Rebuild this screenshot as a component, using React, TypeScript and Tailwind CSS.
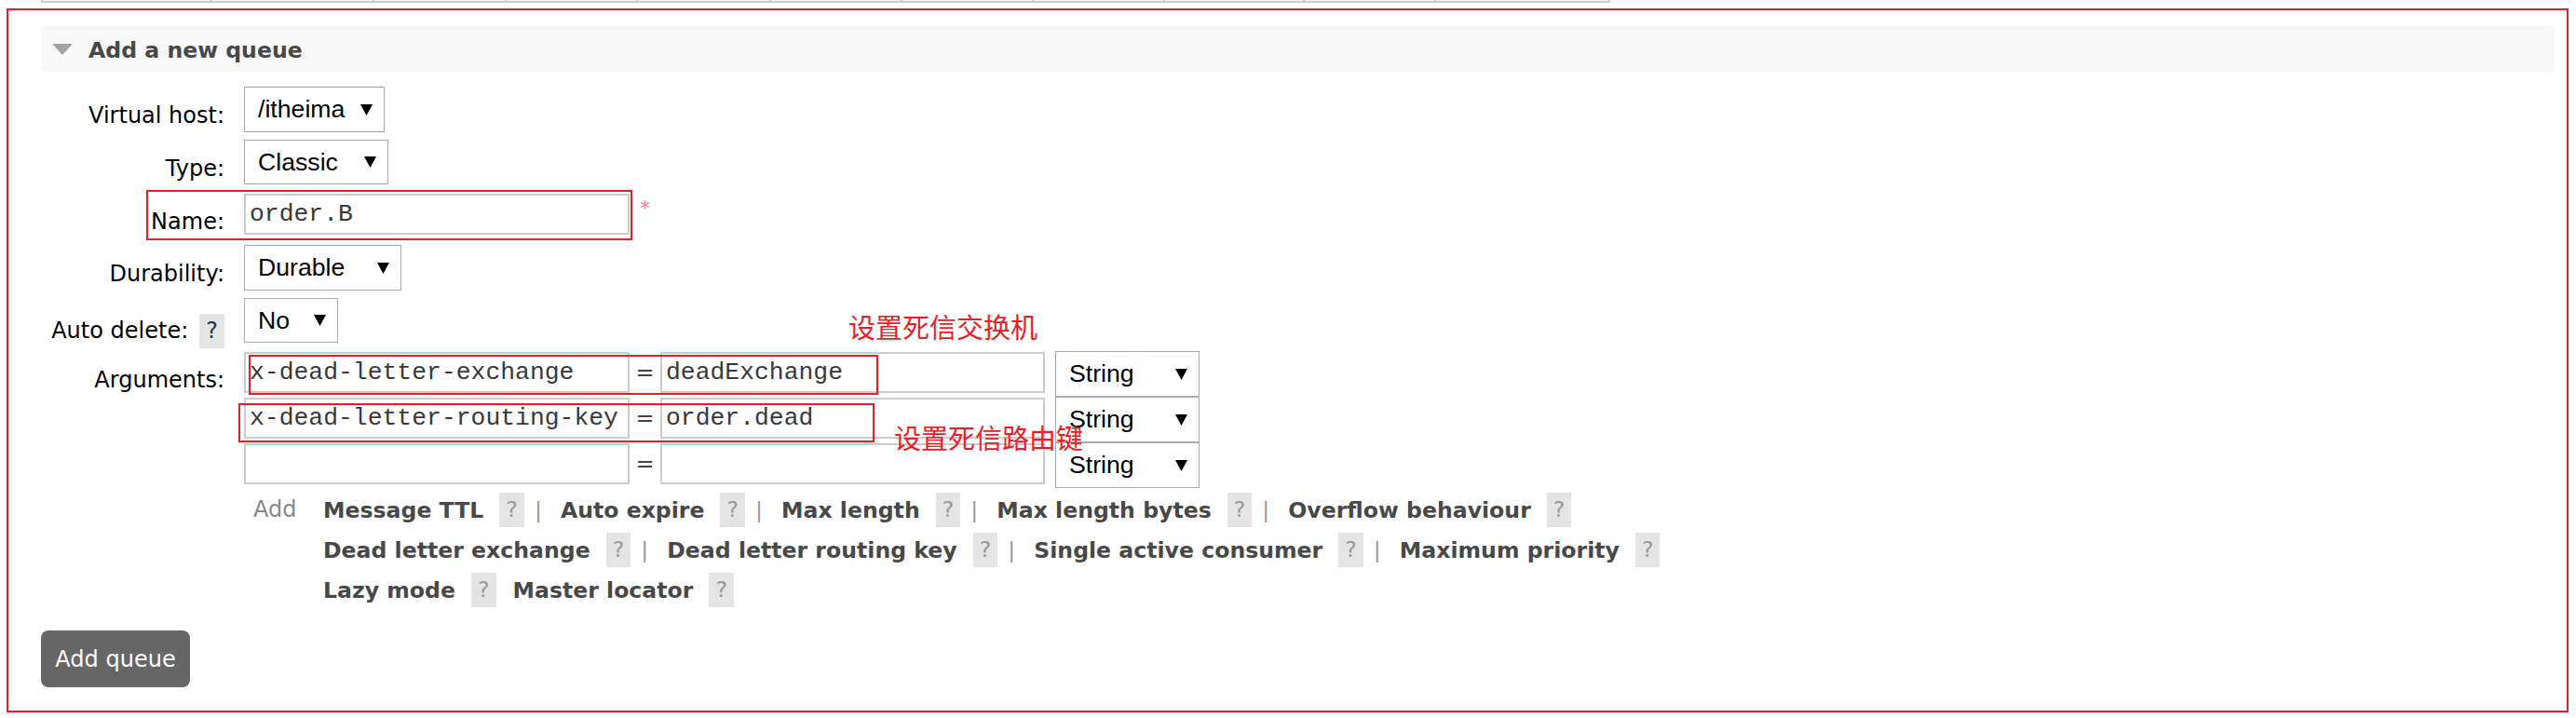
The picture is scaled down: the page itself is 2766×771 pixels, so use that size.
import type { ReactNode } from "react";

const TABLE_CELLS = [182, 174, 142, 141, 143, 141, 141, 141, 150, 141, 189];

function Arrow() {
  return (
    <svg width="13" height="12" viewBox="0 0 13 12" className="flex-shrink-0">
      <path d="M0 0H13L6.5 12Z" fill="#000" />
    </svg>
  );
}

function FakeSelect({ value, className }: { value: string; className: string }) {
  return (
    <div
      className={`flex items-center justify-between border border-[#a9a9a9] bg-white pl-[14px] pr-[12px] font-['Liberation_Sans',Arial,sans-serif] text-[26.67px] leading-none text-black ${className}`}
    >
      <span>{value}</span>
      <Arrow />
    </div>
  );
}

function TextBox({ value, className }: { value?: string; className: string }) {
  return (
    <div
      className={`flex items-center border-2 border-[#cccccc] bg-white pl-[4px] font-['Liberation_Mono','Courier_New',monospace] text-[26.4px] leading-none text-[#383838] ${className}`}
    >
      {value}
    </div>
  );
}

function Help({ dark }: { dark?: boolean }) {
  return (
    <span
      className={`inline-block bg-[#e4e4e4] px-[7px] py-[4px] font-normal leading-[29px] ${
        dark ? "text-[#333]" : "text-[#999]"
      }`}
    >
      ?
    </span>
  );
}

function FormRow({
  label,
  children,
  className = "h-[49px]",
}: {
  label: ReactNode;
  children: ReactNode;
  className?: string;
}) {
  return (
    <div className={`flex ${className}`}>
      <div className="w-[197px] flex-shrink-0 pt-[17px] text-right leading-[28px] text-black">
        {label}
      </div>
      <div className="ml-[21px]">{children}</div>
    </div>
  );
}

function ArgRow({ k, v }: { k?: string; v?: string }) {
  return (
    <div className="flex h-[49px] items-start">
      <TextBox value={k} className="mt-[1px] h-[44px] w-[414px]" />
      <span className="flex w-[33px] justify-center pt-[9px] leading-[28px] text-[#444]">=</span>
      <TextBox value={v} className="mt-[1px] h-[44px] w-[413px]" />
      <FakeSelect value="String" className="ml-[11px] h-[49px] w-[155px]" />
    </div>
  );
}

type Opt = { text: string; sep?: boolean };

const OPTION_LINES: Opt[][] = [
  [
    { text: "Message TTL", sep: true },
    { text: "Auto expire", sep: true },
    { text: "Max length", sep: true },
    { text: "Max length bytes", sep: true },
    { text: "Overflow behaviour" },
  ],
  [
    { text: "Dead letter exchange", sep: true },
    { text: "Dead letter routing key", sep: true },
    { text: "Single active consumer", sep: true },
    { text: "Maximum priority" },
  ],
  [{ text: "Lazy mode" }, { text: "Master locator" }],
];

function OptionLine({ items }: { items: Opt[] }) {
  return (
    <div className="flex h-[43px] items-center">
      {items.map((o, i) => (
        <div key={o.text} className={`flex items-center ${i === 0 ? "" : items[i - 1].sep ? "ml-[20px]" : "ml-[18px]"}`}>
          <span className="leading-[28px]">{o.text}</span>
          <span className="ml-[17px]">
            <Help />
          </span>
          {o.sep && <span className="ml-[11px] w-[8px] font-normal leading-[28px] text-[#999]">|</span>}
        </div>
      ))}
    </div>
  );
}

export default function App() {
  return (
    <div className="relative h-[771px] w-[2766px] overflow-hidden bg-white font-['DejaVu_Sans',Verdana,sans-serif] text-[24px]">
      {/* bottom of the table above */}
      <div className="ml-[44px] flex h-[3px]">
        {TABLE_CELLS.map((w, i) => (
          <div
            key={i}
            className={`h-full border-b-2 border-l-2 border-[#cccccc] ${i === TABLE_CELLS.length - 1 ? "border-r-2" : ""}`}
            style={{ width: w }}
          />
        ))}
      </div>

      {/* outer annotation frame */}
      <div className="ml-[7px] mt-[6px] h-[756px] w-[2751px] border-2 border-[#ed1c24] pl-[35px] pr-[13px] pt-[17px]">
        <div className="flex h-[49px] items-center bg-[#f8f8f8]">
          <svg width="22" height="12" viewBox="0 0 22 12" className="ml-[12px]">
            <path d="M0 0H22L11 12Z" fill="#a3a3a3" />
          </svg>
          <h2 className="ml-[17px] pt-[2px] text-[23.6px] font-bold leading-[28px] text-[#484848]">
            Add a new queue
          </h2>
        </div>

        <div className="mt-[16px] flex flex-col">
          <FormRow label="Virtual host:">
            <FakeSelect value="/itheima" className="h-[49px] w-[151px]" />
          </FormRow>
          <div className="h-[8px]" />
          <FormRow label="Type:" className="h-[48px]">
            <FakeSelect value="Classic" className="h-[48px] w-[155px]" />
          </FormRow>
          <div className="h-[9px]" />
          <FormRow label="Name:" className="h-[48px]">
            <div className="flex items-start">
              <TextBox value="order.B" className="mt-[1px] h-[44px] w-[414px]" />
              <span className="ml-[11px] pt-[3px] font-['DejaVu_Sans',sans-serif] text-[22px] leading-[28px] text-[#ff8080]">
                *
              </span>
            </div>
          </FormRow>
          <div className="h-[8px]" />
          <FormRow label="Durability:">
            <FakeSelect value="Durable" className="h-[49px] w-[169px]" />
          </FormRow>
          <div className="h-[8px]" />
          <FormRow
            className="h-[48px]"
            label={
              <>
                Auto delete:
                <span className="ml-[12px]">
                  <Help dark />
                </span>
              </>
            }
          >
            <FakeSelect value="No" className="h-[48px] w-[101px]" />
          </FormRow>
          <div className="h-[9px]" />
          <FormRow label="Arguments:" className="">
            <div className="flex flex-col">
              <ArgRow k="x-dead-letter-exchange" v="deadExchange" />
              <ArgRow k="x-dead-letter-routing-key" v="order.dead" />
              <ArgRow />
              <div className="mt-[2px] flex">
                <div className="w-[85px] pl-[10px] leading-[43px] text-[#888]">Add</div>
                <div className="flex flex-col text-[23.6px] font-bold text-[#484848]">
                  {OPTION_LINES.map((line, i) => (
                    <OptionLine key={i} items={line} />
                  ))}
                </div>
              </div>
            </div>
          </FormRow>

          <button className="mt-[22px] h-[61px] w-[160px] rounded-[8px] bg-[#666666] text-[24px] leading-[28px] text-white">
            Add queue
          </button>
        </div>
      </div>

      {/* red annotations */}
      <div className="absolute left-[157px] top-[204px] h-[54px] w-[522px] border-2 border-[#ed1c24]" />
      <div className="absolute left-[267px] top-[381px] h-[43px] w-[676px] border-2 border-[#ed1c24]" />
      <div className="absolute left-[256px] top-[433px] h-[42px] w-[683px] border-2 border-[#ed1c24]" />
      <div className="absolute left-[911px] top-[336px] whitespace-nowrap font-['Noto_Sans_CJK_SC',sans-serif] text-[29px] leading-[29px] text-[#ed1c24]">
        设置死信交换机
      </div>
      <div className="absolute left-[960px] top-[455px] whitespace-nowrap font-['Noto_Sans_CJK_SC',sans-serif] text-[29px] leading-[29px] text-[#ed1c24]">
        设置死信路由键
      </div>
    </div>
  );
}
